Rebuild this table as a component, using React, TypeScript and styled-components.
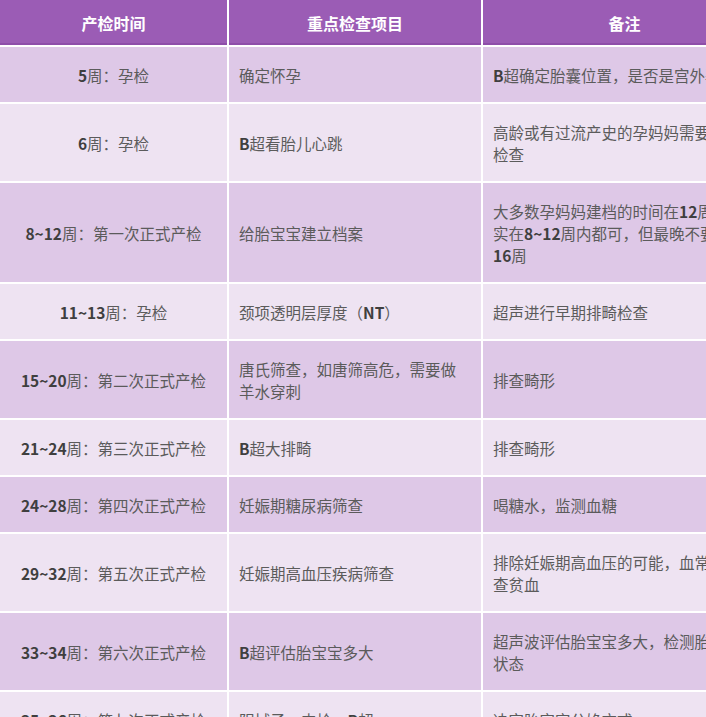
import React from "react";
import styled, { createGlobalStyle } from "styled-components";

const Global = createGlobalStyle`
  html, body { margin: 0; padding: 0; background: #ffffff; overflow: hidden; }
  body { font-family: "Noto Sans CJK SC", "Noto Sans", sans-serif; }
`;

const Page = styled.div`
  width: 706px;
  height: 717px;
  overflow: hidden;
`;

const Table = styled.table`
  border-collapse: collapse;
  table-layout: fixed;
  width: 766px;
`;

const Col = styled.col<{ $w: number }>`
  width: ${(p) => p.$w}px;
`;

const HeadCell = styled.th`
  height: 45px;
  padding: 0;
  background: #9b5cb5;
  box-shadow: inset 0 -2px 0 #8e4ea9;
  color: #ffffff;
  font-size: 16px;
  font-weight: 700;
  text-align: center;
  border-right: 2px solid #ffffff;
  border-bottom: 2px solid #ffffff;
  &:last-child { border-right: none; }
`;

const Row = styled.tr<{ $dark: boolean }>`
  background: ${(p) => (p.$dark ? "#dec8e7" : "#eee3f2")};
`;

const Cell = styled.td<{ $center?: boolean }>`
  padding: 16.5px 10px;
  font-size: 15.5px;
  line-height: 22px;
  color: #5b5b5b;
  text-align: ${(p) => (p.$center ? "center" : "left")};
  vertical-align: middle;
  white-space: nowrap;
  overflow: hidden;
  border-right: 2px solid #ffffff;
  border-bottom: 2px solid #ffffff;
  &:last-child { border-right: none; }
`;

const Latin = styled.b`
  font-weight: 700;
  color: #3f3f3f;
`;

type Item = { time: string; item: string[]; note: string[] };

const rows: Item[] = [
  { time: "5周：孕检", item: ["确定怀孕"], note: ["B超确定胎囊位置，是否是宫外孕"] },
  { time: "6周：孕检", item: ["B超看胎儿心跳"], note: ["高龄或有过流产史的孕妈妈需要做此项", "检查"] },
  {
    time: "8~12周：第一次正式产检",
    item: ["给胎宝宝建立档案"],
    note: ["大多数孕妈妈建档的时间在12周，其", "实在8~12周内都可，但最晚不要超过", "16周"],
  },
  { time: "11~13周：孕检", item: ["颈项透明层厚度（NT）"], note: ["超声进行早期排畸检查"] },
  {
    time: "15~20周：第二次正式产检",
    item: ["唐氏筛查，如唐筛高危，需要做", "羊水穿刺"],
    note: ["排查畸形"],
  },
  { time: "21~24周：第三次正式产检", item: ["B超大排畸"], note: ["排查畸形"] },
  { time: "24~28周：第四次正式产检", item: ["妊娠期糖尿病筛查"], note: ["喝糖水，监测血糖"] },
  {
    time: "29~32周：第五次正式产检",
    item: ["妊娠期高血压疾病筛查"],
    note: ["排除妊娠期高血压的可能，血常规检", "查贫血"],
  },
  {
    time: "33~34周：第六次正式产检",
    item: ["B超评估胎宝宝多大"],
    note: ["超声波评估胎宝宝多大，检测胎位等", "状态"],
  },
  { time: "35~36周：第七次正式产检", item: ["阴拭子，内检，B超"], note: ["决定胎宝宝分娩方式"] },
];

function Rich({ text }: { text: string }) {
  const parts = text.split(/([A-Za-z0-9~]+)/);
  return (
    <>
      {parts.map((p, i) =>
        /^[A-Za-z0-9~]+$/.test(p) ? <Latin key={i}>{p}</Latin> : <React.Fragment key={i}>{p}</React.Fragment>
      )}
    </>
  );
}

function Lines({ lines }: { lines: string[] }) {
  return (
    <>
      {lines.map((l, i) => (
        <React.Fragment key={i}>
          {i > 0 && <br />}
          <Rich text={l} />
        </React.Fragment>
      ))}
    </>
  );
}

export default function App() {
  return (
    <Page>
      <Global />
      <Table>
        <colgroup>
          <Col $w={228} />
          <Col $w={254} />
          <Col $w={284} />
        </colgroup>
        <thead>
          <tr>
            <HeadCell>产检时间</HeadCell>
            <HeadCell>重点检查项目</HeadCell>
            <HeadCell>备注</HeadCell>
          </tr>
        </thead>
        <tbody>
          {rows.map((r, i) => (
            <Row key={i} $dark={i % 2 === 0}>
              <Cell $center>
                <Rich text={r.time} />
              </Cell>
              <Cell>
                <Lines lines={r.item} />
              </Cell>
              <Cell>
                <Lines lines={r.note} />
              </Cell>
            </Row>
          ))}
        </tbody>
      </Table>
    </Page>
  );
}
